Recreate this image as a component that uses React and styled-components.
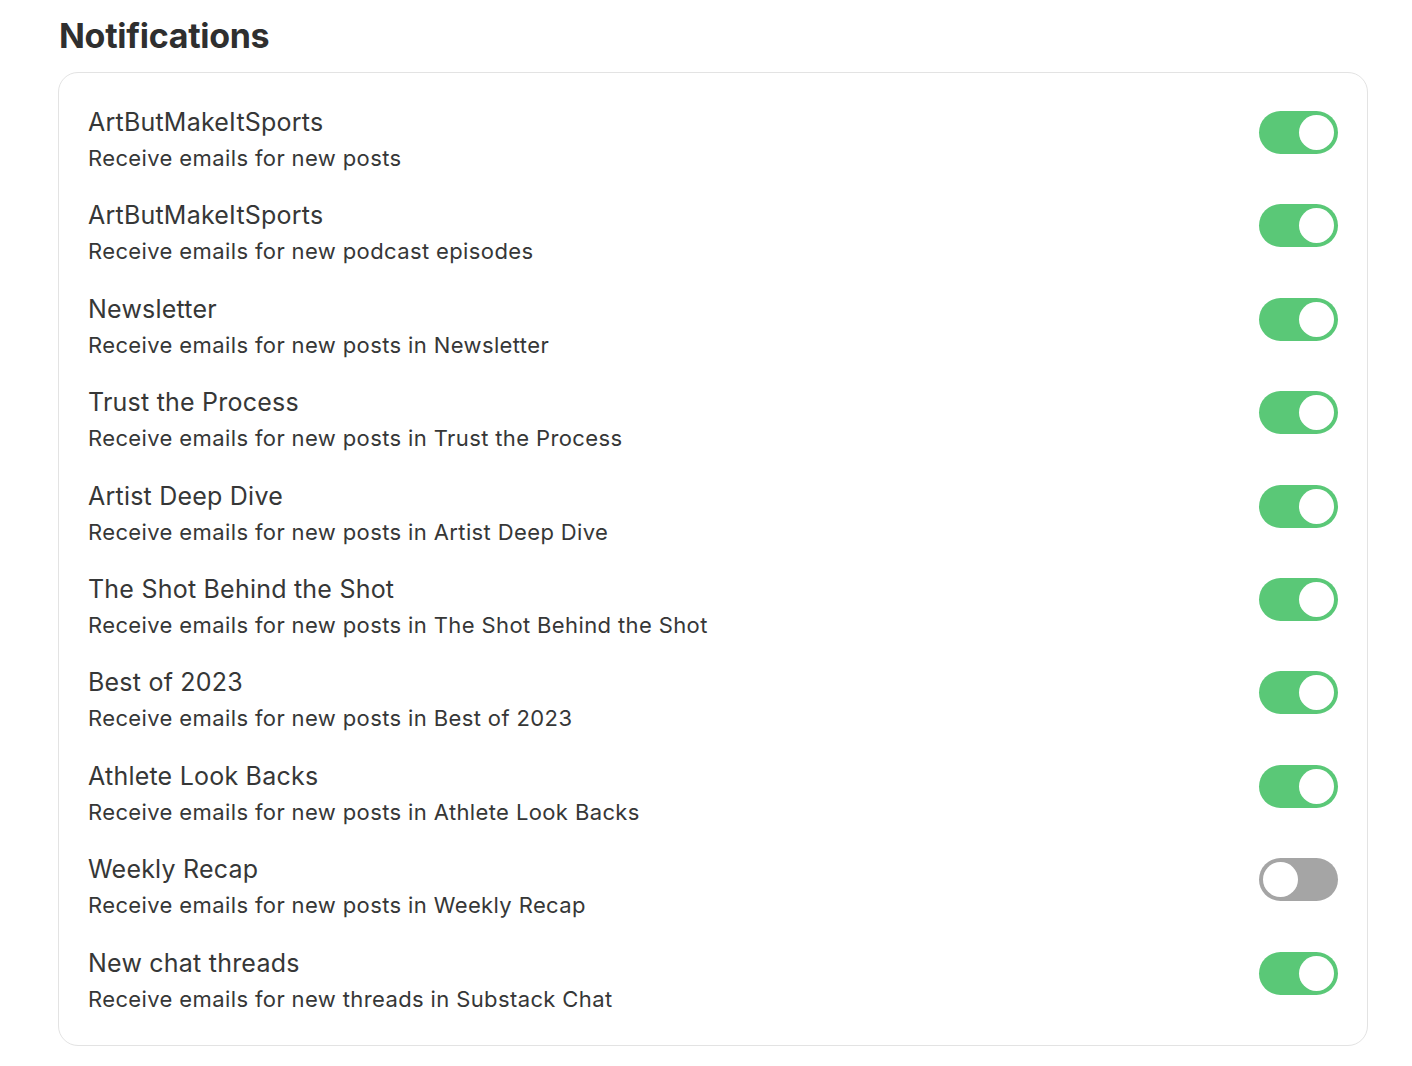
import React, { useState } from "react";
import styled, { createGlobalStyle } from "styled-components";

const Global = createGlobalStyle`
  html, body { margin: 0; padding: 0; background: #ffffff; }
  body { font-family: Inter, "Noto Sans", "Liberation Sans", sans-serif; color: #363737; -webkit-font-smoothing: antialiased; }
`;

const Page = styled.div`
  padding: 14px 44px 20px 58px;
`;

const Heading = styled.h1`
  margin: 0 0 14px 1px;
  font-size: 34px;
  line-height: 44px;
  font-weight: 700;
  letter-spacing: -0.3px;
  color: #2f2f2f;
`;

const Card = styled.div`
  border: 1px solid #e3e3e3;
  border-radius: 20px;
  padding: 31px 29px 28px 29px;
  display: flex;
  flex-direction: column;
  gap: 21.4px;
`;

const Row = styled.div`
  display: flex;
  align-items: flex-start;
  justify-content: space-between;
  height: 72px;
`;

const Texts = styled.div`
  display: flex;
  flex-direction: column;
`;

const Title = styled.div`
  font-size: 25px;
  line-height: 36px;
  font-weight: 400;
  color: #363737;
  letter-spacing: 0.22px;
`;

const Sub = styled.div`
  font-size: 22px;
  line-height: 36px;
  font-weight: 400;
  color: #363737;
  letter-spacing: 0.38px;
`;

const Switch = styled.button`
  margin-top: 7px;
  width: 79px;
  height: 43px;
  border-radius: 22px;
  border: none;
  padding: 0 4px;
  display: flex;
  align-items: center;
  justify-content: ${(p) => (p.$on ? "flex-end" : "flex-start")};
  background: ${(p) => (p.$on ? "#5ac877" : "#a5a5a5")};
  cursor: pointer;
  flex-shrink: 0;
`;

const Knob = styled.span`
  width: 35px;
  height: 35px;
  border-radius: 50%;
  background: #ffffff;
  display: block;
`;

const items = [
  ["ArtButMakeItSports", "Receive emails for new posts", true],
  ["ArtButMakeItSports", "Receive emails for new podcast episodes", true],
  ["Newsletter", "Receive emails for new posts in Newsletter", true],
  ["Trust the Process", "Receive emails for new posts in Trust the Process", true],
  ["Artist Deep Dive", "Receive emails for new posts in Artist Deep Dive", true],
  ["The Shot Behind the Shot", "Receive emails for new posts in The Shot Behind the Shot", true],
  ["Best of 2023", "Receive emails for new posts in Best of 2023", true],
  ["Athlete Look Backs", "Receive emails for new posts in Athlete Look Backs", true],
  ["Weekly Recap", "Receive emails for new posts in Weekly Recap", false],
  ["New chat threads", "Receive emails for new threads in Substack Chat", true],
];

export default function App() {
  const [state, setState] = useState(items.map((i) => i[2]));
  return (
    <>
      <Global />
      <Page>
        <Heading>Notifications</Heading>
        <Card>
          {items.map(([t, s], i) => (
            <Row key={i}>
              <Texts>
                <Title>{t}</Title>
                <Sub>{s}</Sub>
              </Texts>
              <Switch
                $on={state[i]}
                aria-label={t}
                onClick={() => setState((st) => st.map((v, j) => (j === i ? !v : v)))}
              >
                <Knob />
              </Switch>
            </Row>
          ))}
        </Card>
      </Page>
    </>
  );
}
